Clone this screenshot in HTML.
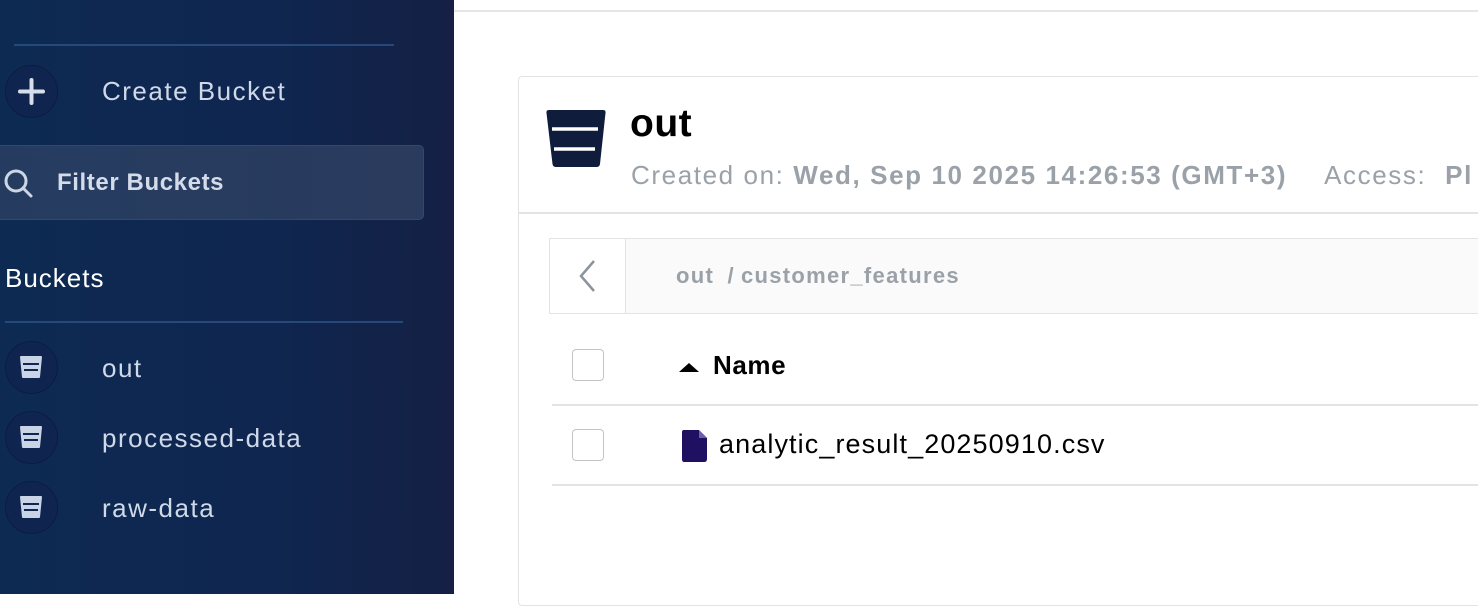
<!DOCTYPE html>
<html><head><style>
*{margin:0;padding:0;box-sizing:border-box}
body{width:1478px;height:594px;overflow:hidden;background:#fff;font-family:"Liberation Sans",sans-serif;position:relative}
.sb{position:absolute;left:0;top:0;width:454px;height:594px;background:linear-gradient(90deg,#0d2a52 0%,#0f2650 60%,#152044 100%)}
.abs{position:absolute}
.circ{position:absolute;left:5px;width:53px;height:53px;border-radius:50%;background:#0f2550;border:1.5px solid #0b1d42}
.lbl{position:absolute;left:102px;color:#cfd9e8;font-size:26px;letter-spacing:1.5px}
</style></head><body>
<div class="sb">
  <div class="abs" style="left:14px;top:44px;width:380px;height:2px;background:#24497a"></div>
  <div class="circ" style="top:65px"><svg width="53" height="53" style="position:absolute;left:-1.5px;top:-1.5px"><path d="M26.5 15v23M15 26.5h23" stroke="#d6deea" stroke-width="4" stroke-linecap="round"/></svg></div>
  <div class="lbl" style="top:76px">Create Bucket</div>
  <div class="abs" style="left:-4px;top:145px;width:428px;height:75px;background:linear-gradient(90deg,#253c60,#2a3b5e);border:1.5px solid #2a4a78;border-radius:5px"></div>
  <svg class="abs" style="left:3px;top:168px" width="32" height="32"><circle cx="13" cy="13" r="10" fill="none" stroke="#cdd6e4" stroke-width="3"/><path d="M20 20l8 8" stroke="#cdd6e4" stroke-width="3" stroke-linecap="round"/></svg>
  <div class="abs" style="left:57px;top:169px;color:#d4dcea;font-size:24px;font-weight:bold;letter-spacing:.6px">Filter Buckets</div>
  <div class="abs" style="left:5px;top:263px;color:#fff;font-size:26px;letter-spacing:1px">Buckets</div>
  <div class="abs" style="left:5px;top:321px;width:398px;height:2px;background:#24497a"></div>
  <div class="circ" style="top:341px"></div>
  <div class="circ" style="top:411px"></div>
  <div class="circ" style="top:481px"></div>
  <svg class="abs" style="left:19px;top:355px" width="24" height="26"><path d="M2 2h20l-2 20H4z" fill="#c9d5e6" stroke="#c9d5e6" stroke-linejoin="round" stroke-width="2"/><path d="M4 9h16M5 15h14" stroke="#102650" stroke-width="2"/></svg>
  <svg class="abs" style="left:19px;top:425px" width="24" height="26"><path d="M2 2h20l-2 20H4z" fill="#c9d5e6" stroke="#c9d5e6" stroke-linejoin="round" stroke-width="2"/><path d="M4 9h16M5 15h14" stroke="#102650" stroke-width="2"/></svg>
  <svg class="abs" style="left:19px;top:495px" width="24" height="26"><path d="M2 2h20l-2 20H4z" fill="#c9d5e6" stroke="#c9d5e6" stroke-linejoin="round" stroke-width="2"/><path d="M4 9h16M5 15h14" stroke="#102650" stroke-width="2"/></svg>
  <div class="lbl" style="top:353px">out</div>
  <div class="lbl" style="top:423px">processed-data</div>
  <div class="lbl" style="top:493px">raw-data</div>
</div>
<div class="abs" style="left:454px;top:10px;width:1024px;height:2px;background:#e6e6e6"></div>
<div class="abs" style="left:518px;top:76px;width:970px;height:530px;border:1.5px solid #e3e3e3;border-radius:4px"></div>
<div class="abs" style="left:518px;top:212px;width:970px;height:2px;background:#e3e3e3"></div>
<svg class="abs" style="left:545px;top:108px" width="62" height="62"><path d="M4 2h54q3 0 2.5 3L55 56q-.5 3-3.5 3H11q-3 0-3.5-3L1.5 5Q1 2 4 2z" fill="#0f1c3c"/><path d="M7 21h46M9 41h41" stroke="#fff" stroke-width="3.5"/></svg>
<div class="abs" style="left:630px;top:102px;font-size:39px;font-weight:bold;color:#000;letter-spacing:.5px">out</div>
<div class="abs" style="left:631px;top:160px;font-size:26px;color:#9aa1a8;white-space:nowrap;letter-spacing:1.6px">Created on: <b>Wed, Sep 10 2025 14:26:53 (GMT+3)</b><span style="margin-left:37px">Access: </span><b style="margin-left:10px">Pl</b></div>
<div class="abs" style="left:549px;top:238px;width:940px;height:76px;border:1.5px solid #e3e3e3;background:#fafafa"></div>
<div class="abs" style="left:549px;top:238px;width:77px;height:76px;border:1.5px solid #e3e3e3;background:#fff"></div>
<svg class="abs" style="left:575px;top:258px" width="26" height="36"><path d="M19 3L6 18l13 15" fill="none" stroke="#8c939c" stroke-width="2.5"/></svg>
<div class="abs" style="left:676px;top:263px;font-size:22px;font-weight:bold;color:#9aa1a8;letter-spacing:1.3px">out <span style="margin:0 6px">/</span>customer_features</div>
<div class="abs" style="left:572px;top:349px;width:32px;height:32px;border:1.5px solid #c4c4c4;border-radius:4px"></div>
<div class="abs" style="left:572px;top:429px;width:32px;height:32px;border:1.5px solid #c4c4c4;border-radius:4px"></div>
<svg class="abs" style="left:678px;top:360px" width="24" height="14"><path d="M1 12L11 3l10 9z" fill="#000"/></svg>
<div class="abs" style="left:713px;top:350px;font-size:26px;font-weight:bold;color:#000;letter-spacing:.6px">Name</div>
<div class="abs" style="left:552px;top:404px;width:930px;height:2px;background:#e3e3e3"></div>
<div class="abs" style="left:552px;top:484px;width:930px;height:2px;background:#e3e3e3"></div>
<svg class="abs" style="left:681px;top:429px" width="28" height="34"><path d="M3 1h15l8 8v21q0 3-3 3H3q-2 0-2-3V3q0-2 2-2z" fill="#1f1061"/><path d="M18 1l8 8h-8z" fill="#6b5fb0"/></svg>
<div class="abs" style="left:719px;top:429px;font-size:27px;color:#000;letter-spacing:1.1px">analytic_result_20250910.csv</div>
</body></html>
